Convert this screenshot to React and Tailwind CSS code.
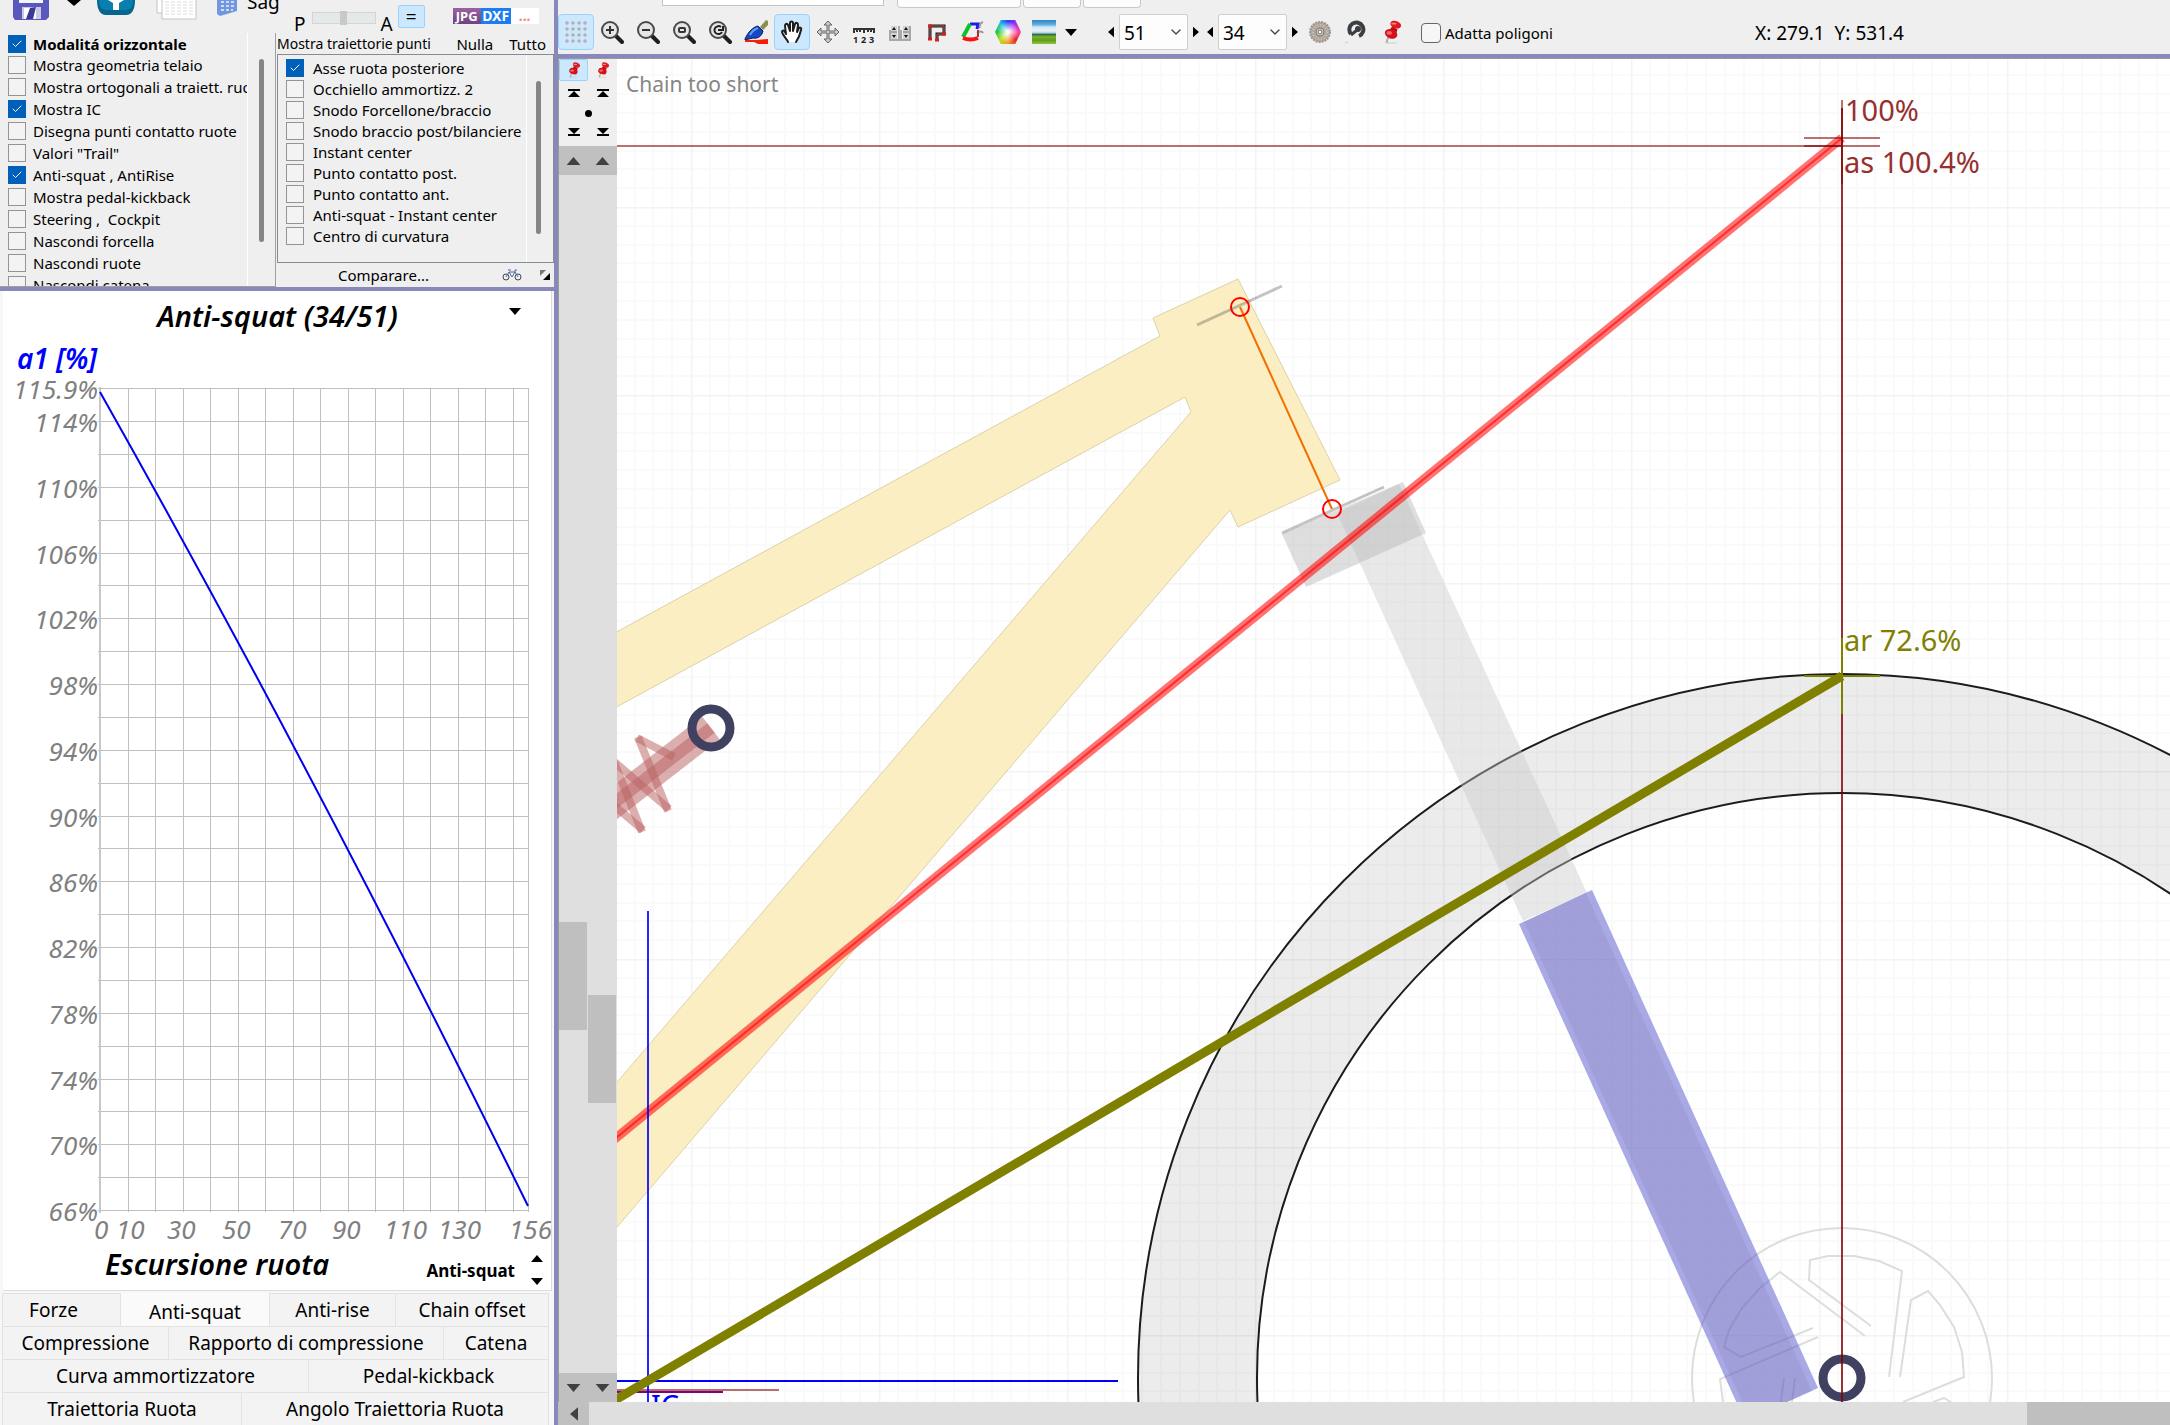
import React from 'react';
import { Check, ChevronDown } from 'lucide-react';
import clsx from 'clsx';

const viewOptions = [
  { label: 'Modalitá orizzontale', checked: true, bold: true },
  { label: 'Mostra geometria telaio' },
  { label: 'Mostra ortogonali a traiett. ruote' },
  { label: 'Mostra IC', checked: true },
  { label: 'Disegna punti contatto ruote' },
  { label: 'Valori "Trail"' },
  { label: 'Anti-squat , AntiRise', checked: true },
  { label: 'Mostra pedal-kickback' },
  { label: 'Steering ,  Cockpit' },
  { label: 'Nascondi forcella' },
  { label: 'Nascondi ruote' },
  { label: 'Nascondi catena' },
];

const pathOptions = [
  { label: 'Asse ruota posteriore', checked: true },
  { label: 'Occhiello ammortizz. 2' },
  { label: 'Snodo Forcellone/braccio' },
  { label: 'Snodo braccio post/bilanciere' },
  { label: 'Instant center' },
  { label: 'Punto contatto post.' },
  { label: 'Punto contatto ant.' },
  { label: 'Anti-squat - Instant center' },
  { label: 'Centro di curvatura' },
];

const tabRows = [
  [
    { label: 'Forze', width: 'w-[118px] pr-4' },
    { label: 'Anti-squat', width: 'w-[149px]', active: true },
    { label: 'Anti-rise', width: 'w-[126px]' },
    { label: 'Chain offset', width: 'flex-1' },
  ],
  [
    { label: 'Compressione', width: 'w-[166px]' },
    { label: 'Rapporto di compressione', width: 'w-[275px]' },
    { label: 'Catena', width: 'flex-1' },
  ],
  [
    { label: 'Curva ammortizzatore', width: 'w-[306px]' },
    { label: 'Pedal-kickback', width: 'flex-1' },
  ],
  [
    { label: 'Traiettoria Ruota', width: 'w-[239px]' },
    { label: 'Angolo Traiettoria Ruota', width: 'flex-1' },
  ],
];

function CheckItem({ option, rowClass, gapClass }) {
  return (
    <label className={clsx('flex items-center whitespace-pre', rowClass, gapClass)}>
      <span className="grid shrink-0">
        <input
          type="checkbox"
          defaultChecked={option.checked}
          className="peer [grid-area:1/1] appearance-none w-[18px] h-[18px] border border-[#949494] bg-[#f3f3f3] checked:bg-[#005fb8] checked:border-[#005fb8]"
        />
        <Check className="[grid-area:1/1] place-self-center w-3 h-3 text-white opacity-0 peer-checked:opacity-100 pointer-events-none" strokeWidth={2} />
      </span>
      <span className={option.bold ? 'font-bold' : undefined}>{option.label}</span>
    </label>
  );
}

function Triangle({ dir, className }) {
  const points = {
    up: '0,7 6,0 12,7',
    down: '0,0 12,0 6,7',
    left: '7,0 7,12 0,6',
    right: '0,0 7,6 0,12',
  }[dir];
  const box = dir === 'up' || dir === 'down' ? '0 0 12 7' : '0 0 7 12';
  return (
    <svg viewBox={box} className={className} fill="currentColor" aria-hidden="true">
      <polygon points={points} />
    </svg>
  );
}

function PinIcon({ className }) {
  return (
    <svg viewBox="0 0 24 26" className={className} aria-hidden="true">
      <path d="M8 18 L6 25" stroke="#a9a9a9" strokeWidth="2" />
      <path d="M5 25h12" stroke="#cfcac6" strokeWidth="1" />
      <path d="M12 7l6 3-2 6-8-3z" fill="#b50d12" />
      <ellipse cx="11" cy="15" rx="7" ry="5" fill="#d3131a" transform="rotate(20 11 15)" />
      <ellipse cx="16" cy="5" rx="6" ry="4" fill="#e2181f" transform="rotate(20 16 5)" />
      <ellipse cx="9" cy="14" rx="3" ry="2" fill="#f2676a" />
      <ellipse cx="14" cy="4" rx="3" ry="1" fill="#f7888a" />
    </svg>
  );
}

function Magnifier({ children }) {
  return (
    <svg viewBox="0 0 24 24" className="w-6 h-6" fill="none" aria-hidden="true">
      <path d="M15 15 L22 22" stroke="#1f1f1f" strokeWidth="4" strokeLinecap="round" />
      <circle cx="10" cy="10" r="8" fill="#e6e6e6" stroke="#4a4a4a" strokeWidth="2" />
      {children}
    </svg>
  );
}

function GridIcon() {
  return (
    <svg viewBox="0 0 24 24" className="w-6 h-6" stroke="#a99f9c" fill="none" aria-hidden="true">
      <path d="M3 1v22M9 1v22M15 1v22M21 1v22M1 3h22M1 9h22M1 15h22M1 21h22" strokeDasharray="4 2" />
    </svg>
  );
}

function BrushIcon() {
  return (
    <svg viewBox="0 0 24 24" className="w-6 h-6" aria-hidden="true">
      <path d="M16 7l6-7 2 1v4l-5 5z" fill="#8d8f52" />
      <path d="M1 19C4 12 9 7 14 6l5 5c-1 5-5 8-10 7l-8 2z" fill="#1747c8" stroke="#141a4a" strokeWidth="1" />
      <path d="M6 15c2-4 5-6 8-7" stroke="#59a5f2" strokeWidth="2" fill="none" />
      <path d="M1 20h12l11-1v5H14l-4-2H1z" fill="#f91c0c" />
    </svg>
  );
}

function HandIcon() {
  return (
    <svg viewBox="0 0 24 24" className="w-6 h-6" fill="#fff" stroke="#1d1d1d" strokeWidth="2" strokeLinejoin="round" strokeLinecap="round" aria-hidden="true">
      <path d="M8 22c-1-3-5-6-6-10 0-2 2-2 3 0l1 2L5 6c0-2 2-3 3-1l2 6V3c0-2 3-2 3 0v8l2-7c1-2 3-1 3 1l-1 7 2-4c1-1 3 0 2 2-1 5-3 9-5 12" />
    </svg>
  );
}

function MoveIcon() {
  return (
    <svg viewBox="0 0 24 24" className="w-6 h-6" fill="#c9c9c9" stroke="#666" strokeWidth="1" strokeLinejoin="round" aria-hidden="true">
      <path d="M12 1l4 4h-3v6h6V8l4 4-4 4v-3h-6v6h3l-4 4-4-4h3v-6H5v3l-4-4 4-4v3h6V5H8z" />
    </svg>
  );
}

function RulerIcon() {
  return (
    <svg viewBox="0 0 24 24" className="w-6 h-6" aria-hidden="true">
      <path d="M1 9h22M2 8v5M5 8v4M8 8v4M12 8v5M16 8v4M19 8v4M22 8v5" stroke="#333" strokeWidth="2" />
      <text x="1" y="23" fontSize="9" fontWeight="700" fontFamily="Open Sans, sans-serif" fill="#222">1</text>
      <text x="9" y="23" fontSize="9" fontWeight="700" fontFamily="Open Sans, sans-serif" fill="#222">2</text>
      <text x="17" y="23" fontSize="9" fontWeight="700" fontFamily="Open Sans, sans-serif" fill="#222">3</text>
    </svg>
  );
}

function LimitsIcon() {
  return (
    <svg viewBox="0 0 24 24" className="w-6 h-6" aria-hidden="true">
      <path d="M1 20h22M2 20V10M22 20V6M11 20V6M13 20V10" stroke="#a8a8a8" strokeWidth="2" />
      <rect x="3" y="6" width="6" height="13" fill="#d2d2d2" />
      <rect x="15" y="6" width="6" height="13" fill="#d2d2d2" />
      <path d="M4 10l2-3 2 3zM4 15l2 3 2-3zM16 10l2-3 2 3zM16 15l2 3 2-3z" fill="#111" />
      <path d="M3 12h6M15 12h6" stroke="#777" />
    </svg>
  );
}

function OutlineIcon() {
  return (
    <svg viewBox="0 0 24 24" className="w-6 h-6" fill="none" aria-hidden="true">
      <path d="M6 19V6h14v8h-7v5" stroke="#1a1a1a" strokeWidth="3" />
      <path d="M6 19V6h14v8h-7v5" stroke="#c4605e" strokeWidth="1" />
      <path d="M4 19h4M4 6h4M18 14h4M11 20h4" stroke="#d81d1d" strokeWidth="3" />
    </svg>
  );
}

function PolygonIcon() {
  return (
    <svg viewBox="0 0 24 24" className="w-6 h-6" fill="none" aria-hidden="true">
      <path d="M10 4h8l-1 5" stroke="#1b1bea" strokeWidth="3" />
      <path d="M10 4L3 17" stroke="#0cc32d" strokeWidth="4" />
      <path d="M3 18c5 2 10 2 15 0" stroke="#f11" strokeWidth="4" />
      <path d="M23 2c-3 1-4 4-3 6M17 13c3-2 5-2 6 0" stroke="#999" strokeWidth="2" />
      <path d="M18 10v7" stroke="#a33" strokeWidth="2" />
    </svg>
  );
}

function ColorIcon() {
  return (
    <span
      aria-hidden="true"
      className="block w-[26px] h-6 [clip-path:polygon(22%_0,78%_0,100%_50%,78%_100%,22%_100%,0_50%)] bg-[radial-gradient(circle,#fff_5%,transparent_60%),conic-gradient(#2340ff,#b02be8,#ff3fa0,#e8202a,#f4a020,#b8e020,#20c840,#20c8d8,#2340ff)]"
    />
  );
}

function LandscapeIcon() {
  return (
    <span
      aria-hidden="true"
      className="block w-6 h-6 bg-[linear-gradient(#2f86c4_0%,#5aa9dc_18%,#d3e8f5_30%,#e8f2f8_45%,#a9cfe6_54%,#2d6b46_60%,#7cb32c_70%,#5f9c1c_84%,#8cc63a_100%)]"
    />
  );
}

function SprocketIcon() {
  return (
    <svg viewBox="0 0 24 24" className="w-6 h-6" fill="none" aria-hidden="true">
      <circle cx="12" cy="12" r="10" fill="#b1a79d" stroke="#9f958b" strokeWidth="2" strokeDasharray="2 1" />
      <circle cx="12" cy="12" r="7" stroke="#c9c2ba" strokeWidth="2" strokeDasharray="1 2" />
      <circle cx="12" cy="12" r="4" fill="#d8d5d2" stroke="#807870" />
      <circle cx="12" cy="12" r="2" fill="#fff" stroke="#666" />
    </svg>
  );
}

function ChainIcon() {
  return (
    <svg viewBox="0 0 24 24" className="w-6 h-6" fill="none" aria-hidden="true">
      <path d="M7 14a7 7 0 1 1 8 2" stroke="#3b3f44" strokeWidth="4" />
      <circle cx="14" cy="9" r="3" fill="#3b3f44" />
      <path d="M13 10l-6 5" stroke="#3b3f44" strokeWidth="3" />
      <path d="M1 23l3-1" stroke="#c9c9c9" />
    </svg>
  );
}

const tools = [
  { name: 'Griglia', icon: <GridIcon />, active: true },
  { name: 'Zoom avanti', icon: <Magnifier><path d="M10 6v8M6 10h8" stroke="#333" strokeWidth="2" /></Magnifier> },
  { name: 'Zoom indietro', icon: <Magnifier><path d="M6 10h8" stroke="#333" strokeWidth="2" /></Magnifier> },
  { name: 'Zoom area', icon: <Magnifier><rect x="7" y="8" width="6" height="4" rx="1" stroke="#333" strokeWidth="2" /></Magnifier> },
  { name: 'Zoom precedente', icon: <Magnifier><path d="M13 7a4 4 0 1 0 1 5M10 10h5V6" stroke="#222" strokeWidth="2" /></Magnifier> },
  { name: 'Colore tratto', icon: <BrushIcon /> },
  { name: 'Sposta vista', icon: <HandIcon />, active: true },
  { name: 'Sposta punti', icon: <MoveIcon /> },
  { name: 'Misure', icon: <RulerIcon /> },
  { name: 'Limiti', icon: <LimitsIcon /> },
  { name: 'Contorno', icon: <OutlineIcon /> },
  { name: 'Poligoni', icon: <PolygonIcon /> },
  { name: 'Colori', icon: <ColorIcon /> },
  { name: 'Immagine', icon: <LandscapeIcon /> },
];

function ToolButton({ name, active, children }) {
  return (
    <button
      type="button"
      aria-label={name}
      className={clsx(
        'w-9 h-9 shrink-0 flex items-center justify-center rounded-sm border',
        active ? 'bg-[#cce8ff] border-[#99d1ff]' : 'border-transparent'
      )}
    >
      {children}
    </button>
  );
}

function GearSelect({ name, value }) {
  return (
    <div className="flex items-center gap-1 shrink-0">
      <button type="button" aria-label={`${name} meno`} className="w-2 h-9 flex items-center justify-center">
        <Triangle dir="left" className="w-[6px] h-3" />
      </button>
      <span className="grid">
        <select
          aria-label={name}
          defaultValue={value}
          className="[grid-area:1/1] appearance-none w-[69px] h-9 pl-1 pt-[2px] border border-[#cfcfcf] rounded-xs bg-[#fdfdfd] text-[19px]"
        >
          <option>{value}</option>
        </select>
        <ChevronDown className="[grid-area:1/1] self-center justify-self-end mr-1 w-4 h-4 text-[#444] pointer-events-none" strokeWidth={2} />
      </span>
      <button type="button" aria-label={`${name} più`} className="w-2 h-9 flex items-center justify-center">
        <Triangle dir="right" className="w-[6px] h-3" />
      </button>
    </div>
  );
}

function QuickBar() {
  return (
    <div className="h-[33px] flex items-start overflow-hidden">
      <button type="button" aria-label="Salva" className="ml-3">
        <svg viewBox="0 0 38 20" className="w-[38px] h-5" aria-hidden="true">
          <path d="M1 0h36v17l-3 3H3l-2-3z" fill="#5b58bd" />
          <path d="M7 0h24v3H7z" fill="#f4f4fb" />
          <path d="M10 7h19v12H10z" fill="#c9c9e4" />
          <path d="M12 8h12v11H12z" fill="#fff" />
          <path d="M18 8l6-1-3 12h-7z" fill="#3a3899" />
        </svg>
      </button>
      <button type="button" aria-label="Altre opzioni" className="ml-[17px]">
        <svg viewBox="0 0 14 6" className="w-[14px] h-[6px]" aria-hidden="true"><path d="M0 0h14L7 6z" /></svg>
      </button>
      <button type="button" aria-label="Carica" className="ml-4">
        <svg viewBox="0 0 38 15" className="w-[38px] h-[15px]" aria-hidden="true">
          <path d="M0 0h38c0 9-3 15-9 15H9C3 15 0 9 0 0z" fill="#05658e" />
          <path d="M2 0h34c0 6-2 10-7 10H9C4 10 2 6 2 0z" fill="#087fae" />
          <path d="M11 0h16l-5 3v7h-6V3z" fill="#fff" />
        </svg>
      </button>
      <button type="button" aria-label="Tabelle" className="ml-[21px]">
        <svg viewBox="0 0 42 20" className="w-[42px] h-5" fill="#fff" stroke="#c4c4c4" aria-hidden="true">
          <path d="M1 -1h30v14H1z" />
          <path d="M6 -1h34v20H6z" />
          <path d="M9 2h28M9 5h28M9 8h28M9 11h28M9 14h28" strokeDasharray="4 2" stroke="#dedede" />
        </svg>
      </button>
      <button type="button" aria-label="Calcolatrice" className="ml-[18px]">
        <svg viewBox="0 0 22 16" className="w-[22px] h-4" aria-hidden="true">
          <path d="M1 0h20v11L4 16l-3-2z" fill="#7397df" />
          <path d="M5 2h14M5 6h14M5 10h12" stroke="#c9dcfa" strokeWidth="2" strokeDasharray="3 2" />
        </svg>
      </button>
      <span className="ml-[9px] -mt-3 w-8 text-[19px] leading-7">Sag</span>
      <label className="ml-[15px] flex text-[19px] leading-8 mt-2">
        P
        <input
          type="range"
          defaultValue="50"
          aria-label="Posteriore / Anteriore"
          className="ml-[6px] mt-1 mr-[5px] appearance-none w-16 h-3 bg-[#e4e8e8] border border-[#d2d6d6] [&::-webkit-slider-thumb]:appearance-none [&::-webkit-slider-thumb]:w-[7px] [&::-webkit-slider-thumb]:h-[14px] [&::-webkit-slider-thumb]:bg-[#c9c9c9]"
        />
        A
      </label>
      <button type="button" className="ml-[5px] mt-[5px] w-[27px] h-[23px] text-[19px] leading-5 rounded-xs border border-[#99d1ff] bg-[#cce8ff]">=</button>
      <div className="ml-7 mt-2 h-4 flex text-[14px] leading-4 font-bold text-white">
        <button type="button" className="w-7 bg-linear-to-b from-[#9c62a0] to-[#6d4480] text-[13px]">JPG</button>
        <button type="button" className="w-[30px] bg-[#1b7df0]">DXF</button>
        <button type="button" className="w-7 bg-white text-[#f58a8a]">...</button>
      </div>
    </div>
  );
}

function OptionPanels() {
  return (
    <div className="h-[254px] flex text-[15px] leading-5">
      <div className="w-[276px] flex bg-[#efefef] border-r border-[#a0a0a0] border-b">
        <div className="w-[248px] overflow-hidden pl-2 border-r border-white">
          {viewOptions.map((o, i) => (
            <CheckItem key={o.label} option={o} rowClass={i === 0 ? 'h-[21px]' : 'h-[22px]'} gapClass="gap-[7px]" />
          ))}
        </div>
        <div className="ml-[11px] mt-[26px] w-[5px] h-[183px] rounded-full bg-[#858585]" />
      </div>
      <div className="flex-1 flex flex-col">
        <div className="h-[21px] flex items-center pl-px pr-2">
          <span className="flex-1 text-[14px]">Mostra traiettorie punti</span>
          <button type="button" className="mr-4">Nulla</button>
          <button type="button">Tutto</button>
        </div>
        <div className="ml-px h-[209px] flex border border-[#868b96]">
          <div className="w-[249px] pt-[2px] pl-2 border-r border-white">
            {pathOptions.map((o) => (
              <CheckItem key={o.label} option={o} rowClass="h-[21px]" gapClass="gap-[9px]" />
            ))}
          </div>
          <div className="ml-[9px] mt-[26px] w-[5px] h-[153px] rounded-full bg-[#858585]" />
        </div>
        <div className="flex-1 flex items-center pr-1">
          <button type="button" className="ml-[62px] flex-1 text-left">Comparare...</button>
          <button type="button" aria-label="Bicicletta" className="mr-[18px]">
            <svg viewBox="0 0 20 12" className="w-5 h-3" fill="none" stroke="#444" aria-hidden="true">
              <circle cx="4" cy="8" r="3" strokeWidth="1" />
              <circle cx="16" cy="8" r="3" strokeWidth="1" />
              <path d="M4 8l3-5h6l3 5M7 3l3 5 3-5M6 1h3M13 3V1h2" stroke="#4b68a0" />
            </svg>
          </button>
          <button type="button" aria-label="Ridimensiona">
            <svg viewBox="0 0 10 10" className="w-[10px] h-[10px]" aria-hidden="true">
              <path d="M0 0h6L0 6z" fill="#777" />
              <path d="M10 3v7H3z" />
            </svg>
          </button>
        </div>
      </div>
    </div>
  );
}

const yRows = Array.from({ length: 25 }, (_, i) => Math.round(421 + (i * 789) / 24));
const xCols = Array.from({ length: 16 }, (_, i) => Math.round(100 + i * 27.5));
const xLabels = [
  [94, '0'], [116, '10'], [167, '30'], [222, '50'], [278, '70'],
  [332, '90'], [384, '110'], [438, '130'], [509, '156'],
];

function SquatChart() {
  return (
    <svg viewBox="3 340 548 910" preserveAspectRatio="xMinYMin meet" className="w-full flex-1 min-h-0" role="img" aria-label="Anti-squat">
      <g stroke="#bfbfbf" strokeWidth="1" shapeRendering="crispEdges">
        <line x1="98" y1="388" x2="528" y2="388" />
        {yRows.map((y) => <line key={y} x1="98" y1={y} x2="528" y2={y} />)}
        {xCols.map((x) => <line key={x} x1={x} y1="388" x2={x} y2="1212" />)}
        <line x1="528" y1="388" x2="528" y2="1212" />
        <line x1="100" y1="387" x2="100" y2="1213" strokeWidth="2" stroke="#c8c8c8" />
      </g>
      <path d="M100 392Q314 771 528 1206" fill="none" stroke="#0000f0" strokeWidth="2" />
      <text x="17" y="369" className="text-[28px] font-semibold italic fill-[#0000ff]">a1 [%]</text>
      <g className="text-[26px] italic fill-[#808080]">
        <g textAnchor="end">
          <text x="98" y="399">115.9%</text>
          {yRows.filter((_, i) => i % 2 === 0).map((y, i) => (
            <text key={y} x="98" y={y + 11}>{114 - i * 4}%</text>
          ))}
        </g>
        {xLabels.map(([x, t]) => <text key={t} x={x} y="1239">{t}</text>)}
      </g>
    </svg>
  );
}

function ChartPanel() {
  return (
    <section className="flex-1 min-h-0 flex flex-col ml-[3px] mr-[2px] bg-white border-r border-b border-[#dcdcdc]">
      <div className="h-[49px] flex items-center pr-[29px] shrink-0">
        <h2 className="flex-1 pl-[44px] text-center text-[29px] font-semibold italic">Anti-squat (34/51)</h2>
        <button type="button" aria-label="Scegli grafico" className="pb-2">
          <Triangle dir="down" className="w-[14px] h-[7px]" />
        </button>
      </div>
      <SquatChart />
      <div className="h-10 shrink-0 flex items-center pl-[102px] pr-2">
        <span className="flex-1 text-[29px] leading-8 pb-3 font-semibold italic">Escursione ruota</span>
        <span className="mr-4 mt-px text-[17px] font-bold">Anti-squat</span>
        <div className="flex flex-col gap-4">
          <button type="button" aria-label="Precedente"><Triangle dir="up" className="w-3 h-[7px]" /></button>
          <button type="button" aria-label="Successivo"><Triangle dir="down" className="w-3 h-[7px]" /></button>
        </div>
      </div>
    </section>
  );
}

function Tabs() {
  return (
    <nav className="mt-[2px] pl-[2px] pr-[5px] text-[19px]">
      {tabRows.map((row, i) => (
        <div key={i} className="flex h-[33px] border-l border-[#e2e2e2]">
          {row.map((tab) => (
            <button
              key={tab.label}
              type="button"
              className={clsx(
                'border-r border-[#e2e2e2] leading-7 whitespace-nowrap',
                tab.width,
                tab.active ? 'bg-[#fafafa] pt-1' : 'bg-[#f3f3f3] border-t'
              )}
            >
              {tab.label}
            </button>
          ))}
        </div>
      ))}
    </nav>
  );
}

function Toolbar() {
  return (
    <header className="h-[54px] shrink-0 bg-[#efefef] overflow-hidden">
      <div className="h-[14px] flex items-start pl-[104px]" aria-hidden="true">
        <div className="w-[222px] h-[6px] bg-white border border-t-0 border-[#c4c4c4]" />
        <div className="ml-[13px] w-[124px] h-2 bg-[#fdfdfd] border border-t-0 border-[#c9c9c9] rounded-b-sm" />
        <div className="ml-[2px] w-[58px] h-2 bg-[#fdfdfd] border border-t-0 border-[#c9c9c9] rounded-b-sm" />
        <div className="ml-[2px] w-[58px] h-2 bg-[#fdfdfd] border border-t-0 border-[#c9c9c9] rounded-b-sm" />
      </div>
      <div className="h-9 flex items-center">
        {tools.map((t) => <ToolButton key={t.name} name={t.name} active={t.active}>{t.icon}</ToolButton>)}
        <button type="button" aria-label="Altre immagini" className="w-[18px] h-9 flex items-center justify-center">
          <Triangle dir="down" className="w-3 h-[7px]" />
        </button>
        <div className="ml-[27px] flex gap-[6px]">
          <GearSelect name="Pignone" value="51" />
          <GearSelect name="Corona" value="34" />
        </div>
        <div className="ml-[3px] flex">
          <ToolButton name="Ingranaggio"><SprocketIcon /></ToolButton>
          <ToolButton name="Catena"><ChainIcon /></ToolButton>
          <ToolButton name="Blocca"><PinIcon className="w-6 h-6" /></ToolButton>
        </div>
        <label className="ml-[11px] pt-[2px] flex items-center gap-1 text-[15px]">
          <input type="checkbox" className="appearance-none w-5 h-5 rounded-sm border border-[#666] bg-[#f6f6f6] checked:bg-[#005fb8]" />
          Adatta poligoni
        </label>
        <output className="ml-auto pt-[2px] w-[415px] text-[19px] whitespace-pre">X: 279.1  Y: 531.4</output>
      </div>
    </header>
  );
}

function ScrollColumn({ label, thumbClass }) {
  return (
    <div className="flex-1 flex flex-col">
      <button type="button" aria-label={`${label} su`} className="h-[29px] shrink-0 flex items-center justify-center bg-[#c0c0c0] text-[#404040]">
        <Triangle dir="up" className="w-[15px] h-2" />
      </button>
      <div className="flex-1 bg-[#dfdfdf] pr-px">
        <div className={clsx('h-[108px] bg-[#bfbfbf]', thumbClass)} />
      </div>
      <button type="button" aria-label={`${label} giù`} className="h-[29px] shrink-0 flex items-center justify-center bg-[#c0c0c0] text-[#404040]">
        <Triangle dir="down" className="w-[15px] h-2" />
      </button>
    </div>
  );
}

function Rail() {
  return (
    <div className="w-[59px] shrink-0 border-l border-[#9a9a9a] flex flex-col">
      <div className="h-[87px] shrink-0 flex flex-col bg-[#efefef]">
        <div className="flex">
          <button type="button" aria-label="Blocca posteriore" className="w-[29px] h-[22px] flex items-center justify-center rounded-xs border border-[#99d1ff] bg-[#cce8ff]">
            <PinIcon className="w-4 h-4" />
          </button>
          <button type="button" aria-label="Blocca anteriore" className="w-[29px] h-[22px] flex items-center justify-center">
            <PinIcon className="w-4 h-4" />
          </button>
        </div>
        <div className="flex justify-around mt-2">
          {['a', 'b'].map((k) => (
            <button key={k} type="button" aria-label={`Massimo ${k}`}>
              <svg viewBox="0 0 14 9" className="w-[14px] h-[9px]" aria-hidden="true"><path d="M1 0h12v2H1zM7 2l6 6H1z" /></svg>
            </button>
          ))}
        </div>
        <button type="button" aria-label="Centra" className="self-center mt-3 w-[7px] h-[7px] rounded-full bg-black" />
        <div className="flex justify-around mt-[10px]">
          {['a', 'b'].map((k) => (
            <button key={k} type="button" aria-label={`Minimo ${k}`}>
              <svg viewBox="0 0 14 9" className="w-[14px] h-[9px]" aria-hidden="true"><path d="M1 7h12v2H1zM1 1h12L7 7z" /></svg>
            </button>
          ))}
        </div>
      </div>
      <div className="flex-1 flex">
        <ScrollColumn label="Posteriore" thumbClass="mt-[747px]" />
        <ScrollColumn label="Anteriore" thumbClass="mt-[820px]" />
      </div>
    </div>
  );
}

// Spring coils, each drawn on its own so that the crossings get darker
const coils = [
  [674, 757, 637, 738],
  [638, 737, 668, 811],
  [669, 809, 611, 759],
  [612, 757, 642, 832],
  [643, 830, 585, 781],
];

function BikeCanvas() {
  return (
    <svg viewBox="617 59 1553 1343" preserveAspectRatio="xMinYMin slice" className="flex-1 min-w-0 h-full bg-white" role="img" aria-label="Geometria bici">
      <defs>
        <pattern id="grid" x="1443" y="207" width="188" height="188" patternUnits="userSpaceOnUse">
          <path d="M19 0v188M38 0v188M56 0v188M75 0v188M94 0v188M113 0v188M132 0v188M150 0v188M169 0v188M0 19h188M0 38h188M0 56h188M0 75h188M0 94h188M0 113h188M0 132h188M0 150h188M0 169h188" stroke="#fafafa" strokeWidth="2" />
          <path d="M0 0v188M0 0h188" stroke="#f3f3f3" strokeWidth="3" />
        </pattern>
      </defs>
      <rect x="617" y="59" width="1553" height="1343" fill="url(#grid)" />

      {/* front wheel */}
      <path
        d="M1138 1378a704 704 0 1 0 1408 0a704 704 0 1 0 -1408 0ZM1257 1378a585 585 0 1 0 1170 0a585 585 0 1 0 -1170 0Z"
        fill="#000" fillOpacity="0.075" fillRule="evenodd" stroke="#1c1c1c" strokeWidth="2"
      />

      {/* brake disc */}
      <g fill="none" stroke="#dddddd" strokeWidth="2">
        <circle cx="1842" cy="1378" r="150" />
        <path d="M1865 1336L1780 1272L1760 1288L1742 1308L1729 1330L1724 1347L1741 1357L1813 1328" />
        <path d="M1871 1326L1809 1280L1810 1260L1828 1256H1854L1879 1261L1902 1271L1889 1377" />
        <path d="M1900 1377L1911 1300L1928 1291L1940 1305L1954 1327L1962 1352L1964 1377L1903 1402" />
        <path d="M1818 1337L1720 1379L1723 1402M1784 1378L1781 1402M1795 1378L1792 1402M1933 1402L1944 1398L1951 1402" />
      </g>

      {/* frame */}
      <polygon
        points="600,641 1160,336 1153,318 1238,279 1340,480 1238,527 1230,510 600,1247 600,1102 1191,412 1185,397 600,716"
        fill="#fbedc0" fillOpacity="0.95" stroke="#dcd2a8" strokeWidth="1"
      />

      {/* shock */}
      <g stroke="#b96060" strokeOpacity="0.5">
        <line x1="600" y1="814" x2="711" y2="728" strokeWidth="29" />
        <line x1="600" y1="814" x2="711" y2="728" strokeWidth="12" />
        {coils.map(([x1, y1, x2, y2]) => (
          <line key={x1} x1={x1} y1={y1} x2={x2} y2={y2} strokeWidth="8" />
        ))}
      </g>

      {/* fork */}
      <polygon points="1337,513 1399,484 1587,893 1523,921" fill="#c8c8c8" fillOpacity="0.42" />
      <polygon points="1282,534 1403,482 1426,533 1306,587" fill="#b0b0b0" fillOpacity="0.42" />
      <polygon points="1519,924 1592,890 1818,1388 1745,1421" fill="#5454cd" fillOpacity="0.5" />
      <polygon points="1524,922 1586,893 1812,1391 1750,1419" fill="#786e96" fillOpacity="0.16" />
      <g stroke="#000" strokeOpacity="0.23" strokeWidth="3">
        <line x1="1197" y1="325" x2="1282" y2="286" />
        <line x1="1282" y1="533" x2="1384" y2="487" />
      </g>
      <line x1="1240" y1="307" x2="1332" y2="509" stroke="#f07000" strokeWidth="2" />

      <g fill="none" stroke="#404060" strokeWidth="9">
        <circle cx="711" cy="728" r="19" />
        <circle cx="1842" cy="1378" r="19" />
      </g>

      {/* anti-squat line */}
      <line x1="600" y1="1151" x2="1842" y2="138" stroke="#ff0000" strokeOpacity="0.55" strokeWidth="9" />
      <line x1="600" y1="1151" x2="1842" y2="138" stroke="#ff0000" strokeOpacity="0.6" strokeWidth="2" />
      <g fill="none" stroke="#ff0000" strokeWidth="2">
        <circle cx="1240" cy="307" r="9" />
        <circle cx="1332" cy="509" r="9" />
      </g>

      <g stroke="#800000" strokeOpacity="0.56" strokeWidth="2">
        <line x1="617" y1="146" x2="1880" y2="146" />
        <line x1="1804" y1="146" x2="1842" y2="146" />
        <line x1="1804" y1="138" x2="1880" y2="138" />
        <line x1="1842" y1="100" x2="1842" y2="184" />
        <line x1="1842" y1="108" x2="1842" y2="1402" strokeOpacity="0.8" />
        <line x1="617" y1="1390" x2="779" y2="1390" />
      </g>

      {/* instant center axes */}
      <line x1="617" y1="1392" x2="723" y2="1392" stroke="#800080" strokeWidth="2" />
      <g stroke="#0000ff" strokeWidth="2">
        <line x1="648" y1="911" x2="648" y2="1402" strokeOpacity="0.85" />
        <line x1="617" y1="1381" x2="1118" y2="1381" />
      </g>

      {/* anti-rise line */}
      <g stroke="#808000">
        <line x1="600" y1="1409" x2="1842" y2="676" strokeWidth="9" />
        <line x1="1842" y1="638" x2="1842" y2="714" strokeWidth="2" />
        <line x1="1804" y1="676" x2="1880" y2="676" strokeWidth="2" />
      </g>

      <g className="text-[29px]">
        <text x="1845" y="121" fill="#963030">100%</text>
        <text x="1844" y="173" fill="#963030">as 100.4%</text>
        <text x="1844" y="651" fill="#808000">ar 72.6%</text>
        <text x="651" y="1416" fill="#0000ff">IC</text>
      </g>
      <text x="626" y="92" fill="#868686" className="text-[21px]">Chain too short</text>
    </svg>
  );
}

export default function App() {
  return (
    <div className="h-screen flex overflow-hidden bg-[#efefef] text-black font-['Noto_Sans','Open_Sans',sans-serif]">
      <aside className="w-[558px] shrink-0 flex flex-col border-r-4 border-[#8888bb]">
        <div className="border-b-4 border-[#8888bb]">
          <QuickBar />
          <OptionPanels />
        </div>
        <div className="flex-1 min-h-0 flex flex-col bg-[#f7f7f7]">
          <ChartPanel />
          <Tabs />
        </div>
      </aside>
      <main className="flex-1 min-w-0 flex flex-col">
        <Toolbar />
        <div className="h-[5px] shrink-0 bg-[#8888bb] border-b border-[#9a9a9a]" />
        <div className="flex-1 min-h-0 flex">
          <Rail />
          <BikeCanvas />
        </div>
        <div className="h-[23px] shrink-0 flex bg-[#dfdfdf]">
          <button type="button" aria-label="Scorri a sinistra" className="w-[31px] flex items-center justify-center bg-[#c0c0c0] text-[#404040]">
            <Triangle dir="left" className="w-2 h-[14px]" />
          </button>
          <div className="ml-auto w-[143px] bg-[#bfbfbf]" />
        </div>
      </main>
    </div>
  );
}
